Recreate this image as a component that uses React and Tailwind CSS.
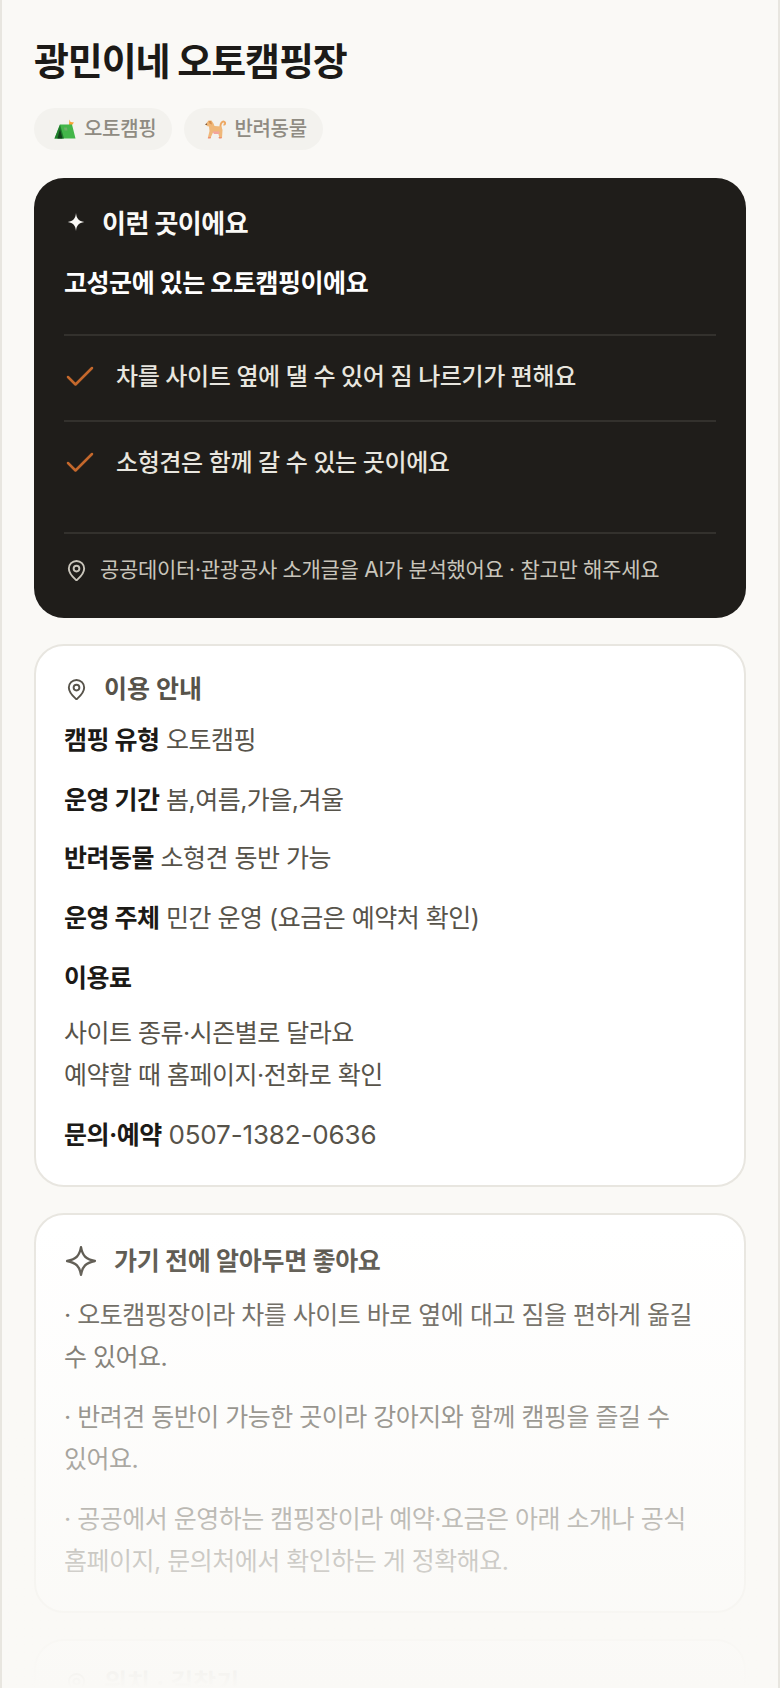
import { Check, MapPin } from "lucide-react";

const Sparkle = ({ className }) => (
  <svg viewBox="0 0 24 24" fill="currentColor" className={className}>
    <path d="M12 0c.8 7.500 3.500 10.800 11 12-7.500 1.200-10.200 4.500-11 12-.8-7.500-3.500-10.800-11-12 7.500-1.200 10.200-4.500 11-12z" />
  </svg>
);

const SparkleLine = ({ className }) => (
  <svg viewBox="0 0 30 30" fill="none" stroke="currentColor" strokeWidth="2.2" strokeLinejoin="round" className={className}>
    <path d="M15 2c1.400 8 4.400 11.300 13 13-8.600 1.700-11.600 5-13 13-1.400-8-4.400-11.300-13-13 8.600-1.700 11.600-5 13-13z" />
  </svg>
);

const Tent = () => (
  <svg viewBox="0 0 22 22" className="h-[22px] w-[22px] shrink-0">
    <path d="M15.500 1.500l1 2.500 3.500.5-2 2.500h-3z" fill="#f7a133" />
    <path d="M6 6.500h12l3.500 14H.5z" fill="#43b649" />
    <path d="M6 6.500L.5 20.500h9.500z" fill="#1f7d2c" />
    <path d="M6 11l-2.500 9.500h5z" fill="#123f1a" />
    <path d="M10 9.500h3l.5 3h-3z" fill="#6fae68" />
  </svg>
);

const Dog = () => (
  <svg viewBox="0 0 22 22" className="h-[22px] w-[22px] shrink-0">
    <path d="M16.500 9.500c-.5-4 2-7 4-5.500 1.300 1 .5 3-1 2.500" fill="none" stroke="#eda862" strokeWidth="1.900" />
    <path d="M2.500 5l2-2.500h3l2 3 1 2.500 7 .5 1 3.500-.5 8h-2.500l-1.500-5.500H9l-2.500 5.500H3.800L5.500 13 5 8.500l-2.500-.5z" fill="#efb778" />
    <path d="M.8 6.500l2-1.200.4 1.700z" fill="#6d4526" />
    <path d="M4.500 3l2.500 0 1 3.500-2.500-1z" fill="#d98f4d" />
    <path d="M8.500 13.500h7l-.5 2.500H10z" fill="#f3a59d" />
    <path d="M3.800 20.500h2.700l.5-1.500H4.400zM15 20.500h2.500l.2-1.500H14.500z" fill="#ee8f70" />
  </svg>
);

const Row = ({ label, children, className = "" }) => (
  <p className={`text-[25px] leading-[37.5px] tracking-[-0.5px] text-[#57534a] ${className}`}>
    <b className="font-bold text-[#1c1a17]">{label}</b> {children}
  </p>
);

const tips = [
  "· 오토캠핑장이라 차를 사이트 바로 옆에 대고 짐을 편하게 옮길 수 있어요.",
  "· 반려견 동반이 가능한 곳이라 강아지와 함께 캠핑을 즐길 수 있어요.",
  "· 공공에서 운영하는 캠핑장이라 예약·요금은 아래 소개나 공식 홈페이지, 문의처에서 확인하는 게 정확해요.",
];

const App = () => {
  return (
    <div className="relative h-[1688px] overflow-hidden border-x-2 border-[#e8e6e0] bg-[#faf9f6] px-[32px] pt-[31px] break-keep font-['Inter','Noto_Sans_CJK_KR',sans-serif]">
      <h1 className="text-[38px] leading-[60px] font-bold tracking-[-1.1px] text-[#1c1a17]">광민이네 오토캠핑장</h1>

      <div className="mt-[17px] flex gap-[12px]">
        <span className="flex h-[42px] items-center gap-[8px] rounded-full bg-[#f3f2ee] pr-[16px] pl-[20px] text-[20px] font-medium tracking-[-0.3px] text-[#8f8b82]">
          <Tent />오토캠핑
        </span>
        <span className="flex h-[42px] items-center gap-[8px] rounded-full bg-[#f3f2ee] pr-[16px] pl-[20px] text-[20px] font-medium tracking-[-0.3px] text-[#8f8b82]">
          <Dog />반려동물
        </span>
      </div>

      <section className="mt-[28px] rounded-[30px] bg-[#1f1d1a] px-[30px] pt-[28px] pb-[32px]">
        <div className="flex items-center gap-[17px]">
          <Sparkle className="-mt-[5px] ml-[3px] h-[18px] w-[18px] text-[#faf9f6]" />
          <h2 className="text-[26px] leading-[36px] font-bold tracking-[-0.52px] text-[#faf9f6]">이런 곳이에요</h2>
        </div>
        <p className="mt-[23px] text-[25px] leading-[36px] font-bold tracking-[-0.44px] text-white">고성군에 있는 오토캠핑이에요</p>
        <div className="mt-[33px] border-t-2 border-[#33312d]">
          <div className="flex h-[84px] items-center gap-[18px] pb-[3px]">
            <Check className="-ml-[2px] h-[36px] w-[36px] text-[#c4682c]" strokeWidth={1.7} />
            <span className="text-[24px] font-medium tracking-[-0.4px] text-[#e8e6df]">차를 사이트 옆에 댈 수 있어 짐 나르기가 편해요</span>
          </div>
          <div className="flex h-[112px] items-start gap-[18px] border-t-2 border-[#33312d] pt-[23px]">
            <Check className="-ml-[2px] h-[36px] w-[36px] text-[#c4682c]" strokeWidth={1.7} />
            <span className="text-[24px] leading-[36px] font-medium tracking-[-0.4px] text-[#e8e6df]">소형견은 함께 갈 수 있는 곳이에요</span>
          </div>
        </div>
        <div className="flex items-center gap-[12px] border-t-2 border-[#33312d] pt-[20px]">
          <MapPin className="ml-[1px] h-[23px] w-[23px] text-[#c9c5bb]" />
          <span className="text-[21px] leading-[32px] tracking-[-0.3px] text-[#c9c5bb]">공공데이터·관광공사 소개글을 AI가 분석했어요 · 참고만 해주세요</span>
        </div>
      </section>

      <section className="mt-[26px] rounded-[30px] border-2 border-[#e8e6e0] bg-white px-[28px] pt-[25px] pb-[31px]">
        <div className="flex items-center gap-[16px]">
          <MapPin className="ml-[1px] h-[23px] w-[23px] text-[#57534a]" />
          <h2 className="text-[25px] leading-[36px] font-bold text-[#57534a]">이용 안내</h2>
        </div>
        <Row label="캠핑 유형" className="mt-[15px]">오토캠핑</Row>
        <Row label="운영 기간" className="mt-[22px]">봄,여름,가을,겨울</Row>
        <Row label="반려동물" className="mt-[21px]">소형견 동반 가능</Row>
        <Row label="운영 주체" className="mt-[22px]">민간 운영 (요금은 예약처 확인)</Row>
        <Row label="이용료" className="mt-[23px]" />
        <p className="mt-[14px] text-[25px] leading-[42.5px] tracking-[-0.5px] text-[#57534a]">
          사이트 종류·시즌별로 달라요
          <br />
          예약할 때 홈페이지·전화로 확인
        </p>
        <Row label="문의·예약" className="mt-[19px]">
          <span className="text-[26px] tracking-[-0.14px]">0507-1382-0636</span>
        </Row>
      </section>

      <section className="mt-[26px] rounded-[30px] border-2 border-[#e8e6e0] bg-white px-[28px] pt-[28px] pb-[29px]">
        <div className="flex items-center gap-[17px]">
          <SparkleLine className="ml-[1px] h-[32px] w-[32px] text-[#57534a]" />
          <h2 className="text-[25px] leading-[36px] font-bold tracking-[-0.3px] text-[#57534a]">가기 전에 알아두면 좋아요</h2>
        </div>
        <div className="mt-[15px] flex flex-col gap-[18px]">
          {tips.map((tip) => (
            <p key={tip} className="text-[25px] leading-[42px] tracking-[-0.5px] text-[#57534a]">{tip}</p>
          ))}
        </div>
      </section>

      <section className="mt-[26px] rounded-[30px] border-2 border-[#e8e6e0] bg-white px-[28px] pt-[24px] pb-[26px]">
        <div className="flex items-center gap-[16px]">
          <MapPin className="ml-[1px] h-[23px] w-[23px] text-[#57534a]" />
          <h2 className="text-[25px] leading-[36px] font-bold text-[#57534a]">위치 · 길찾기</h2>
        </div>
      </section>

      <div className="absolute inset-x-0 bottom-0 h-[460px] bg-gradient-to-b from-[#faf9f6]/0 to-[#faf9f6]" />
    </div>
  );
};

export default App;
